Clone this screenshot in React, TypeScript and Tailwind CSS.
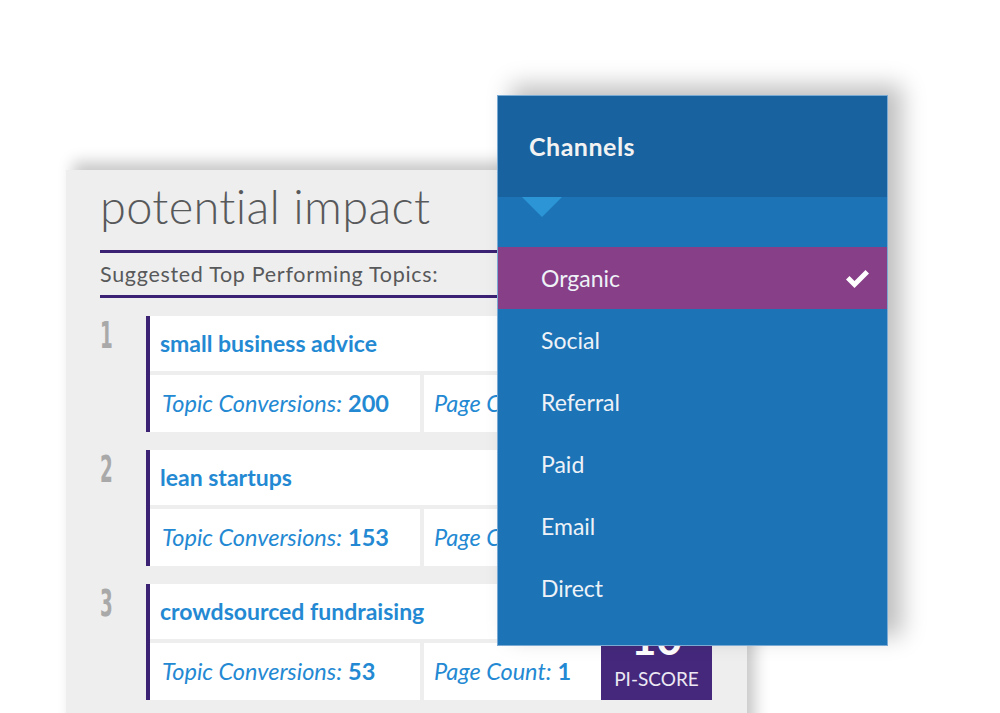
import React from 'react';

interface Topic {
  rank: number;
  name: string;
  conversions: number;
  pages: number;
  score: number;
}

const topics: Topic[] = [
  { rank: 1, name: 'small business advice', conversions: 200, pages: 4, score: 42 },
  { rank: 2, name: 'lean startups', conversions: 153, pages: 3, score: 27 },
  { rank: 3, name: 'crowdsourced fundraising', conversions: 53, pages: 1, score: 10 },
];

const channels = ['Organic', 'Social', 'Referral', 'Paid', 'Email', 'Direct'];

const font = { fontFamily: 'Lato, "Open Sans", sans-serif' };

const TopicCard: React.FC<{ topic: Topic }> = ({ topic }) => (
  <div className="flex h-[116px]">
    {/* rank number */}
    <div className="w-[46px] pt-[1px]">
      <span
        className="inline-block origin-left scale-x-[0.55] text-[37px] font-bold leading-none text-[#a9a9a9]"
        style={{ fontFamily: '"DejaVu Sans Condensed", "DejaVu Sans", sans-serif' }}
      >
        {topic.rank}
      </span>
    </div>
    <div className="flex flex-1 border-l-[4px] border-[#3b2273] bg-white">
      <div className="flex flex-1 flex-col">
        <div className="flex h-[55px] items-center pl-[10px] text-[23px] font-bold text-[#2489d3]">
          {topic.name}
        </div>
        <div className="h-[4px] bg-[#eeeeee]" />
        <div className="flex flex-1 text-[23.5px] text-[#2489d3]">
          <div className="flex w-[270px] items-center pl-[12px]">
            <span className="italic">Topic Conversions:</span>
            <span className="ml-[6px] font-bold">{topic.conversions}</span>
          </div>
          <div className="w-[4px] bg-[#eeeeee]" />
          <div className="flex flex-1 items-center pl-[10px]">
            <span className="italic">Page Count:</span>
            <span className="ml-[6px] font-bold">{topic.pages}</span>
          </div>
        </div>
      </div>
      <div className="flex w-[111px] flex-col items-center justify-end bg-[#45287c] pb-[10px] text-white">
        <span className="text-[44px] font-bold leading-[44px]">{topic.score}</span>
        <span className="mt-[8px] text-[19px] leading-[22px] text-[#ece8f3]">PI-SCORE</span>
      </div>
    </div>
  </div>
);

const App: React.FC = () => {
  return (
    <div className="relative h-[713px] w-[1000px] overflow-hidden bg-white" style={font}>
      {/* potential impact panel */}
      <div className="ml-[65px] mt-[170px] h-[600px] w-[682px] border-l border-[#f7f7f7] bg-[#eeeeee] pl-[34px] pr-[35px] shadow-[8px_-8px_14px_rgba(0,0,0,0.22)]">
        <h2 className="pt-[8px] text-[47px] font-light leading-[56px] tracking-[0.3px] text-[#58595b]">potential impact</h2>
        <div className="mt-[16px] h-[3px] bg-[#3b2273]" />
        <div className="flex h-[42px] items-center text-[21.5px] tracking-[0.7px] text-[#58595b]">Suggested Top Performing Topics:</div>
        <div className="h-[3px] bg-[#3b2273]" />
        <div className="mt-[18px] flex flex-col gap-[18px]">
          {topics.map((t) => (
            <TopicCard key={t.rank} topic={t} />
          ))}
        </div>
      </div>

      {/* channels dropdown */}
      <div className="absolute left-[497px] top-[95px] w-[391px] border border-[#7aa9d3] bg-[#1c74b7] pb-[26px] shadow-[14px_-10px_22px_rgba(0,0,0,0.25)]">
        <div className="flex h-[101px] items-center bg-[#17629f] pl-[31px] text-[25px] font-bold tracking-[0.5px] text-[#f2f2f2]">
          Channels
        </div>
        <div className="h-[50px]">
          <div className="ml-[24px] h-0 w-0 border-l-[20px] border-r-[20px] border-t-[20px] border-l-transparent border-r-transparent border-t-[#2b95d6]" />
        </div>
        {channels.map((c, i) => (
          <div
            key={c}
            className={`flex h-[62px] items-center justify-between pl-[43px] pr-[16px] text-[23px] text-[#eef2f7] ${
              i === 0 ? 'bg-[#873f88]' : ''
            }`}
          >
            <span>{c}</span>
            {i === 0 && (
              <svg width="27" height="21" viewBox="0 0 27 21">
                <path d="M2 11.5 L5.5 8 L10.5 13 L21.5 2 L25 5.5 L10.5 20 Z" fill="#ffffff" />
              </svg>
            )}
          </div>
        ))}
      </div>
    </div>
  );
};

export default App;
